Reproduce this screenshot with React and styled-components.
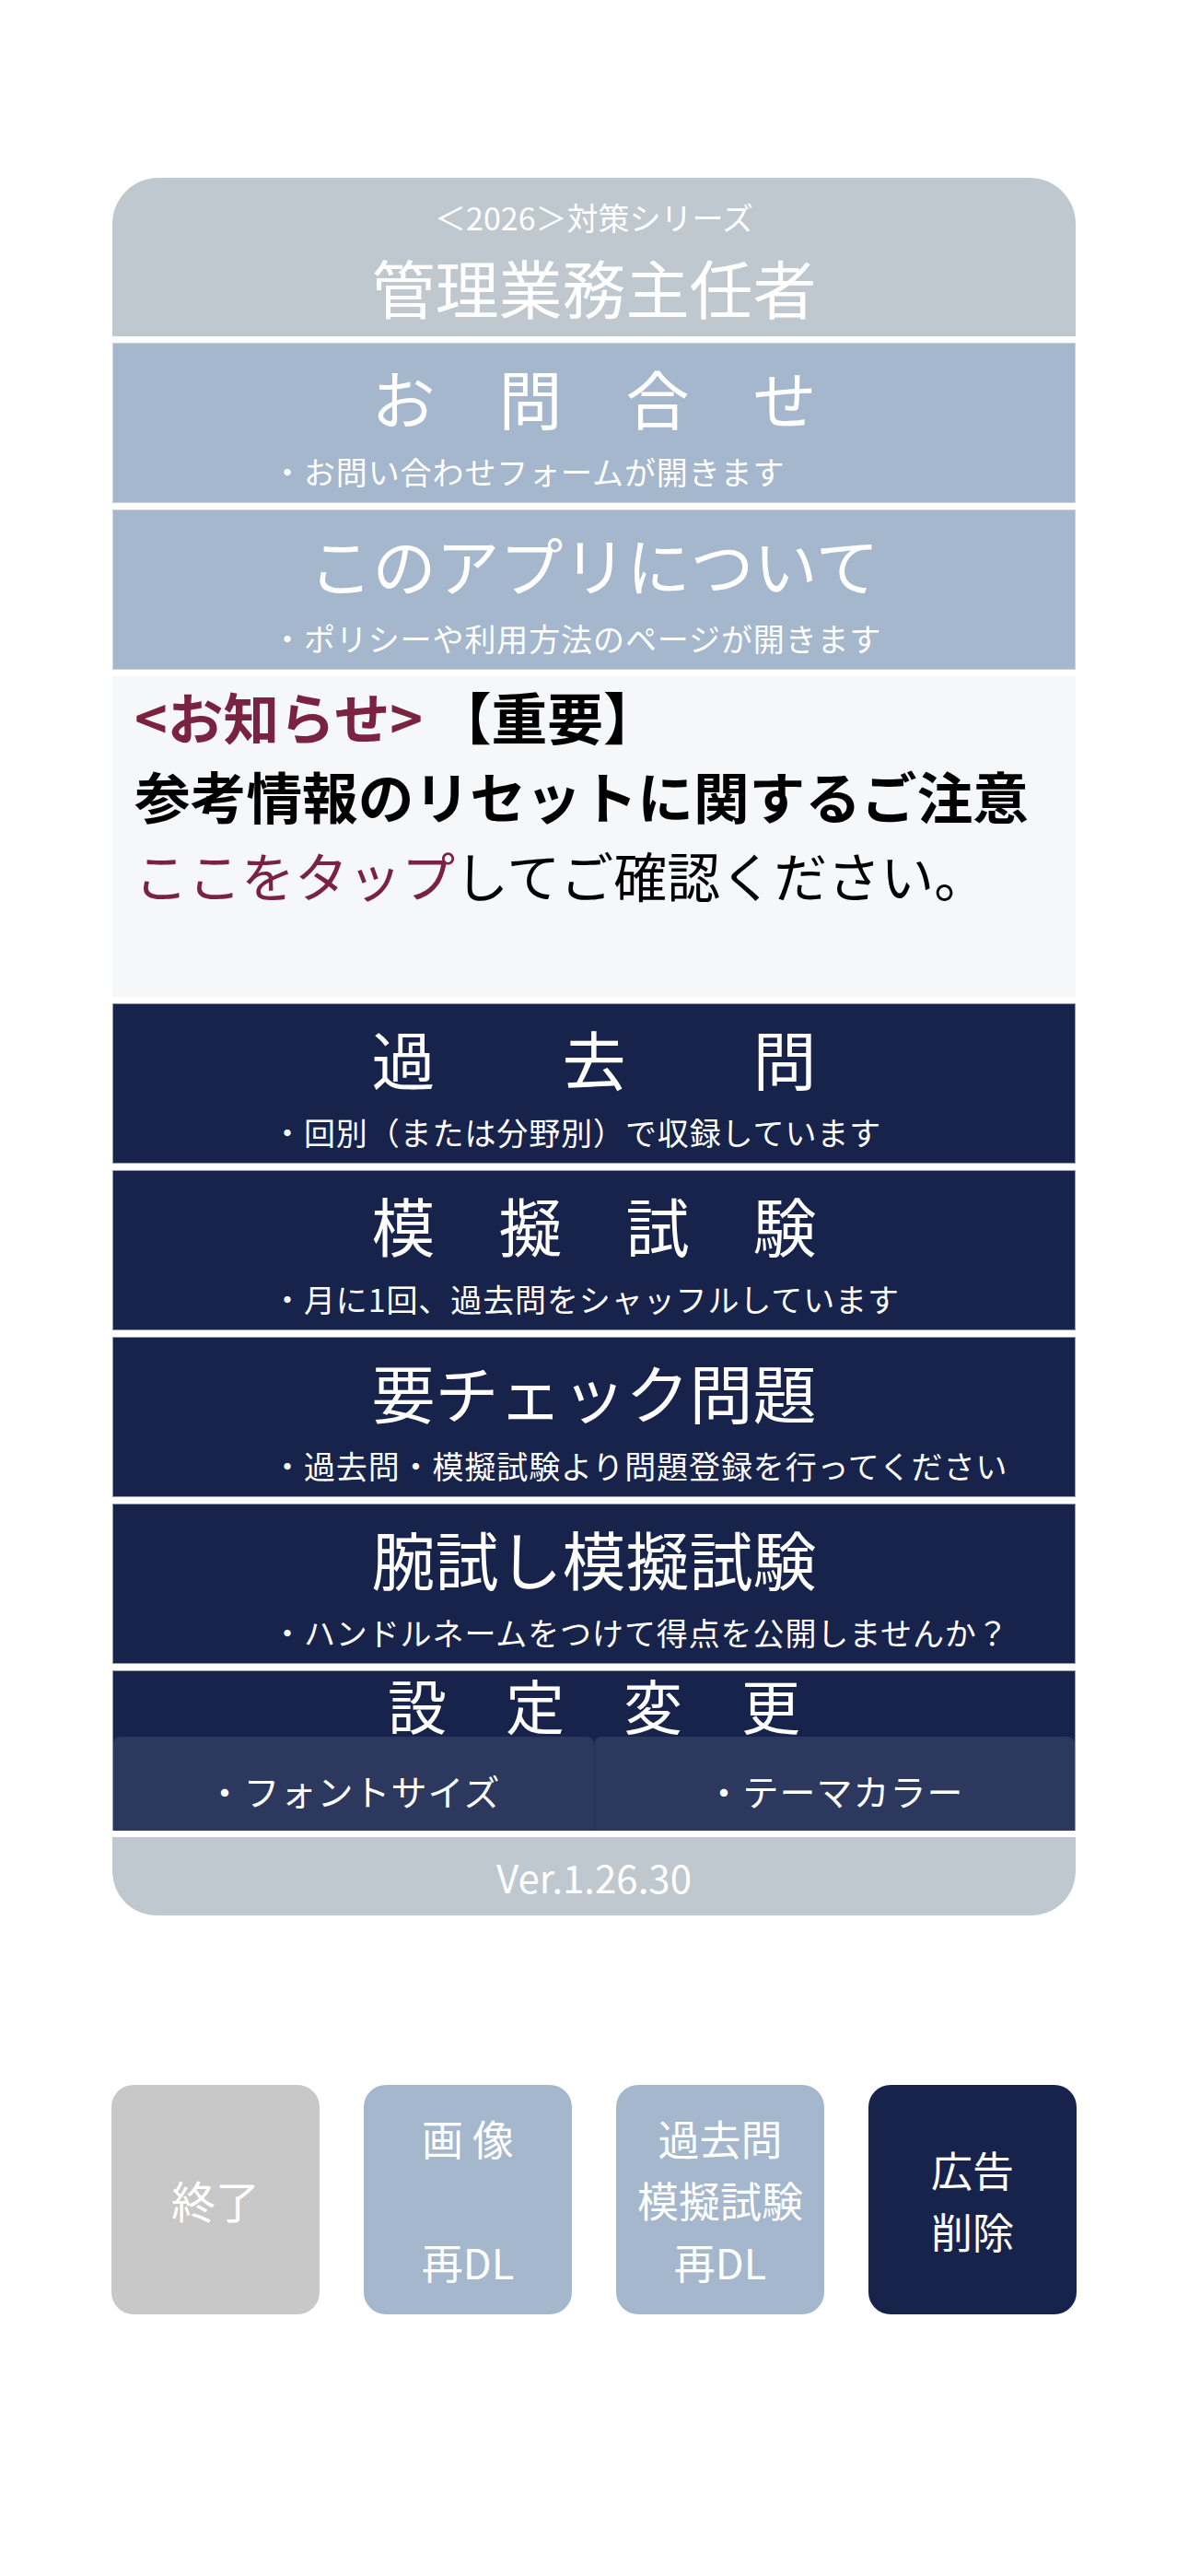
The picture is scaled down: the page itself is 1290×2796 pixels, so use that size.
import React from 'react';
import styled, { createGlobalStyle } from 'styled-components';

const GlobalStyle = createGlobalStyle`
  html, body {
    margin: 0;
    padding: 0;
    background: #ffffff;
  }
  body {
    font-family: "Noto Sans CJK JP", "Noto Sans", sans-serif;
  }
  * {
    box-sizing: border-box;
  }
`;

const colors = {
  gray: '#c0c8cf',
  blue: '#a4b7cc',
  navy: '#18234c',
  navyLight: '#2d385e',
  notice: '#f5f7f9',
  maroon: '#7a2340',
  exit: '#c8c8c8',
};

const Page = styled.div`
  width: 1290px;
  min-height: 2796px;
  padding-top: 193px;
  background: #ffffff;
`;

const Menu = styled.section`
  width: 1046px;
  margin: 0 auto;
  display: flex;
  flex-direction: column;
  gap: 7px;
`;

const Header = styled.header`
  height: 172px;
  background: ${colors.gray};
  border-radius: 50px 50px 0 0;
  display: flex;
  flex-direction: column;
  align-items: center;
  padding-top: 21px;
  color: #ffffff;
`;

const Series = styled.div`
  font-size: 34px;
  line-height: 44px;
`;

const AppName = styled.h1`
  margin: 5px 0 0;
  font-size: 69px;
  line-height: 96px;
  font-weight: 400;
`;

const Row = styled.div`
  height: 174px;
  background: ${(p) => p.$bg};
  border: 1px solid ${(p) => (p.$bg === colors.navy ? '#8f98ac' : '#c9d1db')};
  padding-top: 10px;
  color: #ffffff;
  cursor: pointer;
`;

const RowTitle = styled.div`
  text-align: center;
  font-size: 69px;
  line-height: 96px;
  white-space: pre;
`;

const RowSub = styled.div`
  margin-top: 11px;
  padding-left: 172px;
  font-size: 34px;
  line-height: 44px;
  letter-spacing: 0.9px;
  white-space: nowrap;
`;

const Notice = styled.div`
  height: 348px;
  background: ${colors.notice};
  padding: 0 24px;
  color: #000000;
`;

const NoticeLine = styled.div`
  font-size: ${(p) => (p.$small ? '58px' : '60.7px')};
  line-height: 86px;
  font-weight: ${(p) => (p.$bold ? 700 : 400)};
  white-space: nowrap;
`;

const Maroon = styled.span`
  color: ${colors.maroon};
`;

const SettingsRow = styled.div`
  height: 174px;
  background: ${colors.navy};
  border: 1px solid #8f98ac;
  border-bottom: none;
  display: flex;
  flex-direction: column;
  color: #ffffff;
`;

const SettingsTitle = styled.div`
  height: 71px;
  text-align: center;
  font-size: 64px;
  line-height: 70px;
  white-space: pre;
`;

const SettingsButtons = styled.div`
  flex: 1;
  display: grid;
  grid-template-columns: 1fr 1fr;
`;

const SettingsButton = styled.div`
  background: ${colors.navyLight};
  border-radius: 8px 8px 0 0;
  display: flex;
  align-items: center;
  justify-content: center;
  padding-top: 14px;
  font-size: 39px;
  letter-spacing: 1px;
  & + & {
    border-left: 1px solid #253055;
  }
`;

const Version = styled.footer`
  height: 85px;
  background: ${colors.gray};
  border-radius: 0 0 48px 48px;
  display: flex;
  align-items: center;
  justify-content: center;
  color: #ffffff;
  font-size: 42px;
`;

const Buttons = styled.div`
  width: 1048px;
  margin: 184px auto 0;
  display: grid;
  grid-template-columns: repeat(4, 1fr);
  gap: 48px;
`;

const BigButton = styled.button`
  height: 249px;
  border: none;
  border-radius: 24px;
  background: ${(p) => p.$bg};
  color: #ffffff;
  font-family: inherit;
  font-size: ${(p) => (p.$large ? '48px' : '45px')};
  line-height: 67px;
  white-space: pre;
  display: flex;
  align-items: center;
  justify-content: center;
  text-align: center;
  padding: 0;
`;

const rows = [
  { title: '過　　去　　問', sub: '・回別（または分野別）で収録しています' },
  { title: '模　擬　試　験', sub: '・月に1回、過去問をシャッフルしています' },
  { title: '要チェック問題', sub: '・過去問・模擬試験より問題登録を行ってください' },
  { title: '腕試し模擬試験', sub: '・ハンドルネームをつけて得点を公開しませんか？' },
];

const App = () => {
  return (
    <>
      <GlobalStyle />
      <Page>
        <Menu>
          <Header>
            <Series>＜2026＞対策シリーズ</Series>
            <AppName>管理業務主任者</AppName>
          </Header>

          <Row $bg={colors.blue}>
            <RowTitle>お　問　合　せ</RowTitle>
            <RowSub>・お問い合わせフォームが開きます</RowSub>
          </Row>

          <Row $bg={colors.blue}>
            <RowTitle>このアプリについて</RowTitle>
            <RowSub>・ポリシーや利用方法のページが開きます</RowSub>
          </Row>

          <Notice>
            <NoticeLine $bold>
              <Maroon>&lt;お知らせ&gt;</Maroon> 【重要】
            </NoticeLine>
            <NoticeLine $bold>参考情報のリセットに関するご注意</NoticeLine>
            <NoticeLine $small>
              <Maroon>ここをタップ</Maroon>してご確認ください。
            </NoticeLine>
          </Notice>

          {rows.map((r) => (
            <Row key={r.title} $bg={colors.navy}>
              <RowTitle>{r.title}</RowTitle>
              <RowSub>{r.sub}</RowSub>
            </Row>
          ))}

          <SettingsRow>
            <SettingsTitle>設　定　変　更</SettingsTitle>
            <SettingsButtons>
              <SettingsButton>・フォントサイズ</SettingsButton>
              <SettingsButton>・テーマカラー</SettingsButton>
            </SettingsButtons>
          </SettingsRow>

          <Version>Ver.1.26.30</Version>
        </Menu>

        <Buttons>
          <BigButton $bg={colors.exit} $large>終了</BigButton>
          <BigButton $bg={colors.blue}>{'画 像\n\n再DL'}</BigButton>
          <BigButton $bg={colors.blue}>{'過去問\n模擬試験\n再DL'}</BigButton>
          <BigButton $bg={colors.navy}>{'広告\n削除'}</BigButton>
        </Buttons>
      </Page>
    </>
  );
};

export default App;
